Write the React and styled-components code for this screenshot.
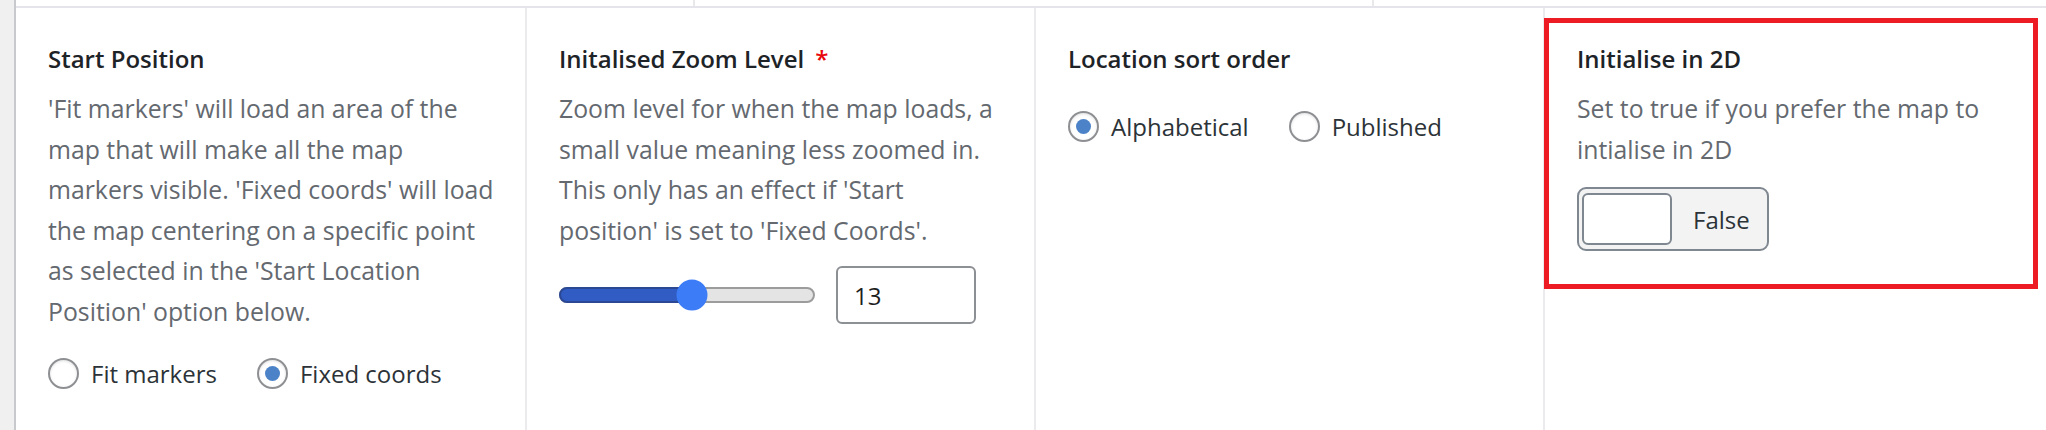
import React from "react";
import styled, { createGlobalStyle } from "styled-components";

const GlobalStyle = createGlobalStyle`
  html, body {
    margin: 0;
    padding: 0;
    background: #fff;
  }
  body {
    font-family: "Open Sans", "Noto Sans", sans-serif;
    -webkit-font-smoothing: antialiased;
  }
`;

const Page = styled.div`
  display: flex;
  height: 430px;
  overflow: hidden;
`;

const SideRail = styled.div`
  width: 14px;
  flex: none;
  background: #f0f0f1;
  border-right: 2px solid #c8c9cc;
`;

const Main = styled.div`
  flex: 1;
  min-width: 0;
  display: flex;
  flex-direction: column;
`;

const PrevRow = styled.div`
  display: grid;
  grid-template-columns: 677px 679px 679px;
  height: 6px;
`;

const PrevCell = styled.div`
  border-left: ${({ $first }) => ($first ? "none" : "2px solid #e9e9ec")};
`;

const FieldRow = styled.div`
  flex: 1;
  display: grid;
  grid-template-columns: repeat(4, 509px);
  border-top: 2px solid #e4e4ea;
`;

const Field = styled.div`
  position: relative;
  box-sizing: border-box;
  padding: 35px ${({ $padRight = 32 }) => $padRight}px 0 32px;
  border-left: ${({ $first }) => ($first ? "none" : "2px solid #ebebed")};
`;

const Title = styled.h3`
  margin: 0 0 13px;
  font-size: 24px;
  line-height: 32px;
  font-weight: 600;
  color: #1d2327;
`;

const Required = styled.span`
  color: #e8070d;
  margin-left: 11px;
`;

const Description = styled.p`
  margin: 0;
  font-size: 24.8px;
  line-height: 40.5px;
  color: #646970;
`;

const RadioGroup = styled.div`
  display: flex;
  align-items: center;
  margin-top: ${({ $afterTitle }) => ($afterTitle ? "32px" : "23px")};
`;

const Option = styled.label`
  display: flex;
  align-items: center;
  gap: 12px;
  margin-right: 40px;
  font-size: 24px;
  line-height: 39px;
  color: #2c3338;
`;

const Radio = styled.input.attrs({ type: "radio" })`
  appearance: none;
  margin: 0;
  width: 31px;
  height: 31px;
  box-sizing: border-box;
  border: 2px solid #8d8f92;
  border-radius: 50%;
  background: #fff;
  box-shadow: inset 0 1px 3px rgba(0, 0, 0, 0.12);
  display: grid;
  place-items: center;

  &:checked::before {
    content: "";
    width: 15px;
    height: 15px;
    border-radius: 50%;
    background: #4b82c8;
  }
`;

const SliderRow = styled.div`
  display: flex;
  align-items: center;
  gap: 21px;
  margin-top: 16px;
`;

const Track = styled.div`
  position: relative;
  width: 256px;
  height: 16px;
  box-sizing: border-box;
  border: 2px solid #9c9c9c;
  border-radius: 8px;
  background: #e4e4e4;
`;

const TrackFill = styled.div`
  position: absolute;
  left: -2px;
  top: -2px;
  bottom: -2px;
  box-sizing: border-box;
  border: 2px solid #2a4894;
  border-radius: 8px;
  background: #305cc4;
`;

const Thumb = styled.div`
  position: absolute;
  top: 50%;
  width: 31px;
  height: 31px;
  border-radius: 50%;
  background: #3c7cf7;
  transform: translate(-50%, -50%);
`;

const NumberInput = styled.input`
  width: 140px;
  height: 58px;
  box-sizing: border-box;
  border: 2px solid #8c8f94;
  border-radius: 6px;
  padding: 0 16px;
  font-family: inherit;
  font-size: 24px;
  color: #1e1e1e;
  background: #fff;
  outline: none;
`;

const Toggle = styled.button`
  display: flex;
  width: fit-content;
  align-items: center;
  gap: 21px;
  height: 64px;
  margin-top: 18px;
  padding: 0 17px 0 3px;
  box-sizing: border-box;
  border: 2px solid #7f8790;
  border-radius: 9px;
  background: #f3f3f4;
  font-family: inherit;
  font-size: 24px;
  color: #2c3338;
  cursor: pointer;
`;

const ToggleKnob = styled.span`
  width: 90px;
  height: 52px;
  box-sizing: border-box;
  border: 2px solid #7f8790;
  border-radius: 6px;
  background: #fff;
`;

const Highlight = styled.div`
  position: absolute;
  left: -1px;
  top: 10px;
  width: 494px;
  height: 271px;
  box-sizing: border-box;
  border: 5px solid #ed1c24;
  pointer-events: none;
`;

const ZoomSlider = ({ value, min, max }) => {
  const pct = ((value - min) / (max - min)) * 100;
  return (
    <SliderRow>
      <Track role="slider" aria-valuenow={value}>
        <TrackFill style={{ width: `calc(${pct}% + 2px)` }} />
        <Thumb style={{ left: `${pct}%` }} />
      </Track>
      <NumberInput type="text" defaultValue={value} />
    </SliderRow>
  );
};

const App = () => {
  return (
    <>
      <GlobalStyle />
      <Page>
        <SideRail />
        <Main>
          <PrevRow>
            <PrevCell $first />
            <PrevCell />
            <PrevCell />
          </PrevRow>
          <FieldRow>
            <Field $first $padRight={30}>
              <Title>Start Position</Title>
              <Description>
                'Fit markers' will load an area of the map that will make all
                the map markers visible. 'Fixed coords' will load the map
                centering on a specific point as selected in the 'Start
                Location Position' option below.
              </Description>
              <RadioGroup>
                <Option>
                  <Radio name="start" />
                  Fit markers
                </Option>
                <Option>
                  <Radio name="start" defaultChecked />
                  Fixed coords
                </Option>
              </RadioGroup>
            </Field>

            <Field $padRight={34}>
              <Title>
                Initalised Zoom Level<Required>*</Required>
              </Title>
              <Description>
                Zoom level for when the map loads, a small value meaning less
                zoomed in. This only has an effect if 'Start position' is set
                to 'Fixed Coords'.
              </Description>
              <ZoomSlider value={13} min={1} max={24} />
            </Field>

            <Field>
              <Title>Location sort order</Title>
              <RadioGroup $afterTitle>
                <Option>
                  <Radio name="sort" defaultChecked />
                  Alphabetical
                </Option>
                <Option>
                  <Radio name="sort" />
                  Published
                </Option>
              </RadioGroup>
            </Field>

            <Field>
              <Highlight />
              <Title>Initialise in 2D</Title>
              <Description>
                Set to true if you prefer the map to intialise in 2D
              </Description>
              <Toggle type="button">
                <ToggleKnob />
                False
              </Toggle>
            </Field>
          </FieldRow>
        </Main>
      </Page>
    </>
  );
};

export default App;
